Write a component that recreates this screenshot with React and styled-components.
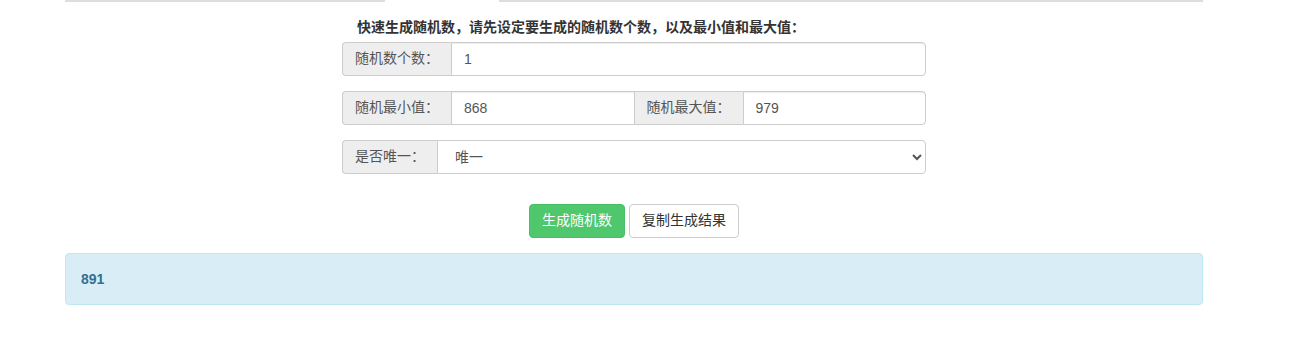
import React, { useState } from "react";
import styled, { createGlobalStyle } from "styled-components";

const GlobalStyle = createGlobalStyle`
  * { box-sizing: border-box; }
  body {
    margin: 0;
    background: #fff;
    color: #333;
    font-family: "Liberation Sans", "Noto Sans CJK SC", sans-serif;
    font-size: 14px;
    line-height: 1.42857;
  }
`;

const Page = styled.div`
  width: 1138px;
  margin-left: 65px;
`;

const TabLine = styled.div`
  display: flex;
  height: 2px;
`;

const TabEdge = styled.div`
  border-top: 2px solid #ddd;
  width: ${(p) => (p.w ? `${p.w}px` : "auto")};
  flex: ${(p) => (p.w ? "none" : 1)};
`;

const TabGap = styled.div`
  width: 114px;
`;

const Form = styled.div`
  width: 584px;
  margin: 15px auto 0;
`;

const Title = styled.p`
  margin: 0 0 5px;
  padding: 0 15px;
  font-weight: bold;
  line-height: 20px;
  color: #333;
`;

const Group = styled.div`
  display: flex;
  height: 34px;
  margin-bottom: 15px;
`;

const Addon = styled.span`
  flex: none;
  display: flex;
  align-items: center;
  padding: 0 12px;
  background: #eee;
  border: 1px solid #ccc;
  color: #555;
  border-radius: ${(p) => (p.first ? "4px 0 0 4px" : "0")};
  border-right: none;
  border-left: ${(p) => (p.first ? "1px solid #ccc" : "none")};
`;

const Input = styled.input`
  flex: 1;
  min-width: 0;
  height: 34px;
  padding: 0 12px;
  border: 1px solid #ccc;
  border-radius: ${(p) => (p.last ? "0 4px 4px 0" : "0")};
  font: inherit;
  color: #555;
  background: #fff;
  outline: none;
  box-shadow: inset 0 1px 1px rgba(0, 0, 0, 0.075);
`;

const Select = styled.select`
  flex: 1;
  height: 34px;
  padding: 0 8px 0 13px;
  border: 1px solid #ccc;
  border-radius: 0 4px 4px 0;
  font: inherit;
  color: #555;
  background: #fff;
  outline: none;
`;

const Actions = styled.div`
  display: flex;
  justify-content: center;
  gap: 4px;
  margin-top: 30px;
`;

const Button = styled.button`
  height: 34px;
  padding: 0 12px;
  border-radius: 4px;
  font: inherit;
  cursor: pointer;
  border: 1px solid ${(p) => (p.primary ? "#4cbf66" : "#ccc")};
  background: ${(p) => (p.primary ? "#4fc76c" : "#fff")};
  color: ${(p) => (p.primary ? "#fff" : "#333")};
`;

const Result = styled.div`
  margin-top: 15px;
  padding: 15px;
  background: #d9edf7;
  border: 1px solid #bce8f1;
  border-radius: 4px;
  color: #31708f;
  font-weight: bold;
  line-height: 20px;
`;

const App = () => {
  const [count, setCount] = useState("1");
  const [min, setMin] = useState("868");
  const [max, setMax] = useState("979");

  return (
    <Page>
      <GlobalStyle />
      <TabLine>
        <TabEdge w={320} />
        <TabGap />
        <TabEdge />
      </TabLine>
      <Form>
        <Title>快速生成随机数，请先设定要生成的随机数个数，以及最小值和最大值：</Title>
        <Group>
          <Addon first>随机数个数：</Addon>
          <Input last value={count} onChange={(e) => setCount(e.target.value)} />
        </Group>
        <Group>
          <Addon first>随机最小值：</Addon>
          <Input value={min} onChange={(e) => setMin(e.target.value)} />
          <Addon>随机最大值：</Addon>
          <Input last value={max} onChange={(e) => setMax(e.target.value)} />
        </Group>
        <Group>
          <Addon first>是否唯一：</Addon>
          <Select defaultValue="1">
            <option value="1">唯一</option>
            <option value="0">不唯一</option>
          </Select>
        </Group>
        <Actions>
          <Button primary>生成随机数</Button>
          <Button>复制生成结果</Button>
        </Actions>
      </Form>
      <Result>891</Result>
    </Page>
  );
};

export default App;
